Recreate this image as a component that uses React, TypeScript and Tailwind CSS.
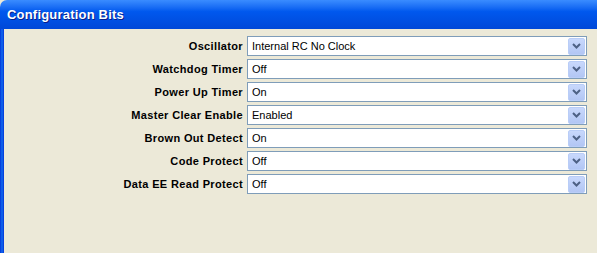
const rows: [string, string][] = [
  ["Oscillator", "Internal RC No Clock"],
  ["Watchdog Timer", "Off"],
  ["Power Up Timer", "On"],
  ["Master Clear Enable", "Enabled"],
  ["Brown Out Detect", "On"],
  ["Code Protect", "Off"],
  ["Data EE Read Protect", "Off"],
]

function Chevron() {
  return (
    <svg width="9" height="6" viewBox="0 0 9 6">
      <path d="M1 1 L4.5 4.5 L8 1" fill="none" stroke="#4d6185" strokeWidth="2" />
    </svg>
  )
}

function Combo({ value }: { value: string }) {
  return (
    <div className="flex h-[20px] items-center border border-[#7f9db9] bg-white pl-[4px] pr-[1px]">
      <span className="flex-1 text-[11px] text-black">{value}</span>
      <div className="flex h-[17px] w-[17px] items-center justify-center rounded-[2px] border border-[#b9cdf7] bg-gradient-to-b from-[#c8d8fc] to-[#b2c6f4]">
        <Chevron />
      </div>
    </div>
  )
}

export default function App() {
  return (
    <div className="flex h-[253px] w-[597px] flex-col bg-[#ece9d8] font-['Liberation_Sans',Tahoma,sans-serif]">
      <div className="flex h-[29px] items-center rounded-tl-[7px] bg-gradient-to-b from-[#3a8cff] via-[#0058ee] via-40% to-[#0048d8] pl-[7px]">
        <span className="text-[13px] font-bold tracking-[0.2px] text-white [text-shadow:1px_1px_0_#0a1e8a]">Configuration Bits</span>
      </div>
      <div className="flex flex-1">
        <div className="w-[4px] bg-gradient-to-r from-[#0831d9] via-[#166aee] to-[#0831d9]" />
        <div className="grid flex-1 grid-cols-[239px_340px] content-start gap-x-[4px] gap-y-[3px] pt-[7px]">
          {rows.map(([label, value]) => (
            <div key={label} className="contents">
              <div className="flex h-[20px] items-center justify-end text-[11px] font-bold tracking-[0.35px] text-black">{label}</div>
              <Combo value={value} />
            </div>
          ))}
        </div>
      </div>
    </div>
  )
}
